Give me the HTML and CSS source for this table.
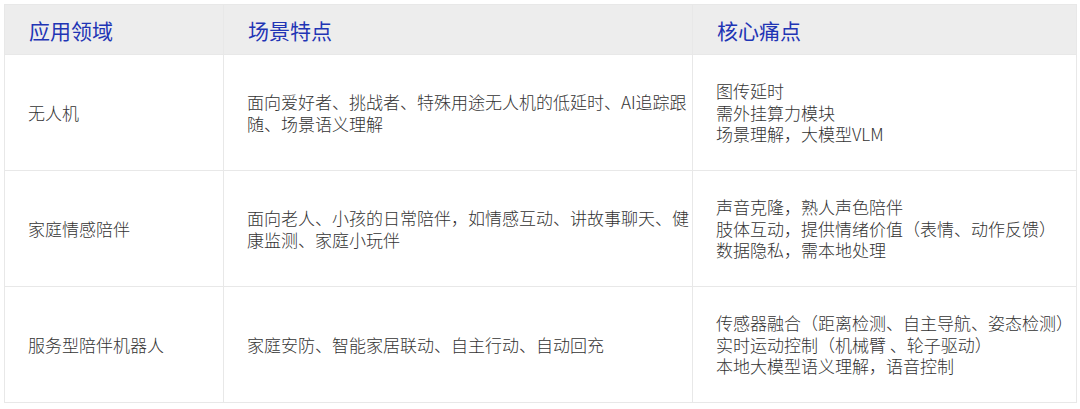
FILE: index.html
```html
<!DOCTYPE html>
<html lang="zh-CN">
<head>
<meta charset="utf-8">
<link rel="stylesheet" href="styles.css">
</head>
<body>
<table class="grid">
  <colgroup>
    <col class="c1"><col class="c2"><col class="c3">
  </colgroup>
  <thead>
    <tr>
      <th>应用领域</th>
      <th>场景特点</th>
      <th>核心痛点</th>
    </tr>
  </thead>
  <tbody>
    <tr>
      <td>无人机</td>
      <td>面向爱好者、挑战者、特殊用途无人机的低延时、AI追踪跟随、场景语义理解</td>
      <td>图传延时<br>需外挂算力模块<br>场景理解，大模型VLM</td>
    </tr>
    <tr>
      <td>家庭情感陪伴</td>
      <td>面向老人、小孩的日常陪伴，如情感互动、讲故事聊天、健康监测、家庭小玩伴</td>
      <td>声音克隆，熟人声色陪伴<br>肢体互动，提供情绪价值（表情、动作反馈）<br>数据隐私，需本地处理</td>
    </tr>
    <tr>
      <td>服务型陪伴机器人</td>
      <td>家庭安防、智能家居联动、自主行动、自动回充</td>
      <td>传感器融合（距离检测、自主导航、姿态检测）<br>实时运动控制（机械臂 、轮子驱动）<br>本地大模型语义理解，语音控制</td>
    </tr>
  </tbody>
</table>
</body>
</html>
```

FILE: styles.css
```css
html, body {
  margin: 0;
  padding: 0;
  background: #ffffff;
}
body {
  padding: 4px;
  font-family: "Noto Sans CJK SC", "Noto Sans", sans-serif;
  color: #333333;
}
.grid {
  border-collapse: collapse;
  table-layout: fixed;
  width: 1072px;
}
.c1 { width: 219px; }
.c2 { width: 469px; }
.c3 { width: 384px; }
.grid th, .grid td {
  border: 1px solid #e8e8e8;
  text-align: left;
  vertical-align: middle;
}
.grid th {
  background: #ededed;
  color: #1f35b5;
  font-size: 21px;
  font-weight: 400;
  height: 49px;
  padding: 0 0 0 24px;
  line-height: 28px;
}
.grid td {
  font-size: 17px;
  font-weight: 300;
  line-height: 21.5px;
  height: 116px;
  padding: 0 0 0 23px;
  box-sizing: border-box;
}
```
